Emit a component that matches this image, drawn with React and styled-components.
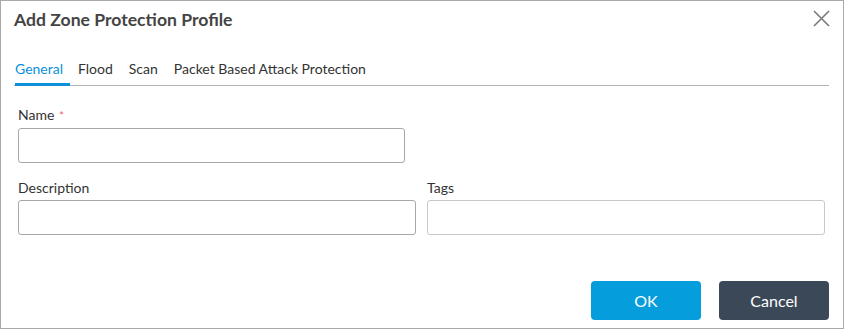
import styled, { createGlobalStyle } from "styled-components";

const GlobalStyle = createGlobalStyle`
  html, body {
    margin: 0;
    padding: 0;
    background: #fff;
  }
  body {
    font-family: Lato, "Open Sans", sans-serif;
  }
`;

export default function App() {
  return (
    <>
      <GlobalStyle />
      <Dialog>
        <Header>
          <Title>Add Zone Protection Profile</Title>
          <Close aria-label="Close">
            <svg width="17" height="17" viewBox="0 0 17 17">
              <path d="M1 1 L16 16 M16 1 L1 16" stroke="#7a7a7a" strokeWidth="1.6" fill="none" />
            </svg>
          </Close>
        </Header>
        <Tabs>
          <Tab $active>General</Tab>
          <Tab>Flood</Tab>
          <Tab>Scan</Tab>
          <Tab>Packet Based Attack Protection</Tab>
        </Tabs>
        <Form>
          <Field $width="387px">
            <Label>
              Name <Required>*</Required>
            </Label>
            <Input />
          </Field>
          <Row>
            <Field>
              <Label>Description</Label>
              <Input />
            </Field>
            <Field>
              <Label>Tags</Label>
              <Input $light />
            </Field>
          </Row>
        </Form>
        <Footer>
          <Button $primary>OK</Button>
          <Button>Cancel</Button>
        </Footer>
      </Dialog>
    </>
  );
}

const Dialog = styled.div`
  width: 844px;
  height: 329px;
  box-sizing: border-box;
  border: 1px solid #a9a9a9;
  background: #fff;
  display: flex;
  flex-direction: column;
  color: #333;
`;

const Header = styled.div`
  display: flex;
  justify-content: space-between;
  align-items: flex-start;
  padding: 8px 13px 0 13px;
  height: 45px;
  box-sizing: border-box;
`;

const Title = styled.h1`
  margin: 0;
  font-size: 17.6px;
  font-weight: 700;
  color: #444;
  line-height: 22px;
`;

const Close = styled.button`
  border: 0;
  background: none;
  padding: 0;
  margin-top: 1px;
  cursor: pointer;
  display: flex;
`;

const Tabs = styled.div`
  display: flex;
  margin: 14px 14px 0 13px;
  border-bottom: 1px solid #b3b3b3;
`;

const Tab = styled.div`
  font-size: 14px;
  line-height: 18px;
  padding: 0 8px 5px 0;
  margin-right: 8px;
  margin-bottom: -1px;
  color: ${(p) => (p.$active ? "#0b91d9" : "#333")};
  border-bottom: 3px solid ${(p) => (p.$active ? "#0b91d9" : "transparent")};
  &:first-child {
    margin-left: 1px;
    padding-right: 7px;
  }
`;

const Form = styled.div`
  display: flex;
  flex-direction: column;
  gap: 16px;
  padding: 20px 18px 0 17px;
`;

const Row = styled.div`
  display: grid;
  grid-template-columns: 398px 398px;
  gap: 11px;
`;

const Field = styled.div`
  display: flex;
  flex-direction: column;
  width: ${(p) => p.$width || "auto"};
`;

const Label = styled.label`
  font-size: 14px;
  line-height: 18px;
  color: #333;
  margin-bottom: 3px;
`;

const Required = styled.span`
  color: #f26b74;
  font-size: 12px;
  margin-left: 1px;
`;

const Input = styled.input`
  height: 35px;
  box-sizing: border-box;
  border: 1px solid ${(p) => (p.$light ? "#c8c8c8" : "#a8a8a8")};
  border-radius: 3px;
  font-family: inherit;
  font-size: 13px;
  padding: 0 8px;
  outline: none;
`;

const Footer = styled.div`
  margin-top: auto;
  display: flex;
  justify-content: flex-end;
  gap: 18px;
  padding: 0 14px 8px 0;
`;

const Button = styled.button`
  width: 110px;
  height: 39px;
  border: 0;
  border-radius: 4px;
  font-family: inherit;
  font-size: 16px;
  color: #fff;
  background: ${(p) => (p.$primary ? "#069ddd" : "#3b4858")};
  cursor: pointer;
`;
